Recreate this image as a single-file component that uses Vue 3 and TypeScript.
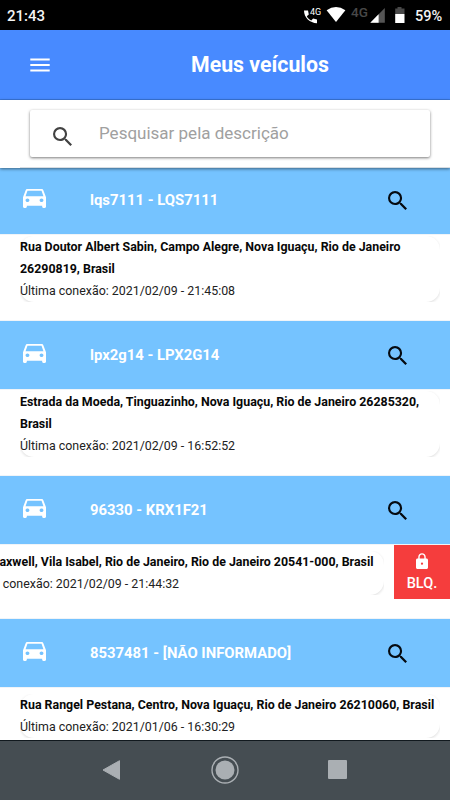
<script setup lang="ts">
interface Vehicle {
  title: string
  address: string
  date: string
  swiped?: boolean
}

const vehicles: Vehicle[] = [
  {
    title: 'lqs7111 - LQS7111',
    address: 'Rua Doutor Albert Sabin, Campo Alegre, Nova Iguaçu, Rio de Janeiro 26290819, Brasil',
    date: '2021/02/09 - 21:45:08',
  },
  {
    title: 'lpx2g14 - LPX2G14',
    address: 'Estrada da Moeda, Tinguazinho, Nova Iguaçu, Rio de Janeiro 26285320, Brasil',
    date: '2021/02/09 - 16:52:52',
  },
  {
    title: '96330 - KRX1F21',
    address: 'Rua Maxwell, Vila Isabel, Rio de Janeiro, Rio de Janeiro 20541-000, Brasil',
    date: '2021/02/09 - 21:44:32',
    swiped: true,
  },
  {
    title: '8537481 - [NÃO INFORMADO]',
    address: 'Rua Rangel Pestana, Centro, Nova Iguaçu, Rio de Janeiro 26210060, Brasil',
    date: '2021/01/06 - 16:30:29',
  },
]
</script>

<template>
  <div class="phone">
    <div class="status">
      <span class="clock">21:43</span>
      <svg class="status-icons" viewBox="0 0 105 30" width="105" height="30">
        <path d="M1 10.500h4l.8 4-2 1.700c1 2 2.500 3.400 4.500 4.400l1.800-2 3.900 1v3.600C6.800 23 1 17.500 1 10.500z" fill="#fff" />
        <text x="7" y="15.200" font-size="9" font-weight="400" fill="#fff">4G</text>
        <path d="M23.600 10.200Q33 3.800 42.400 10.200L33 22z" fill="#fff" />
        <text x="48" y="16.800" font-size="13.500" font-weight="500" fill="#484848">4G</text>
        <path d="M67.300 22.700L81.800 8v14.700z" fill="#555" />
        <path d="M67.300 22.700l8.300-8.400v8.400z" fill="#fff" />
        <path d="M92.200 8.500h2.300V7h4v1.500h3V14h-9.300z" fill="#484848" />
        <path d="M92.200 14h9.300v9h-9.300z" fill="#fff" />
      </svg>
      <span class="percent">59%</span>
    </div>

    <header class="bar">
      <svg class="burger" viewBox="0 0 20 14" width="20" height="14">
        <path d="M.3 1.500h19.400M.3 7h19.400M.3 12.500h19.400" stroke="#fff" stroke-width="2.200" />
      </svg>
      <h1>Meus veículos</h1>
    </header>

    <div class="search-area">
      <div class="search">
        <svg viewBox="3 3 17.490 17.490" width="19" height="19">
          <path fill="#424242" d="M15.500 14h-.79l-.28-.27A6.471 6.471 0 0 0 16 9.500 6.500 6.500 0 1 0 9.500 16c1.610 0 3.090-.59 4.230-1.570l.27.28v.79l5 4.990L20.490 19l-4.990-5zm-6 0C7.010 14 5 11.990 5 9.500S7.010 5 9.500 5 14 7.010 14 9.500 11.990 14 9.500 14z" />
        </svg>
        <span>Pesquisar pela descrição</span>
      </div>
      <div class="rule"></div>
    </div>

    <main class="list">
      <section v-for="v in vehicles" :key="v.title">
        <div class="head">
          <svg class="car" viewBox="3 5 18 16" preserveAspectRatio="none" width="23" height="19">
            <path fill="#fff" d="M18.920 6.010C18.720 5.420 18.160 5 17.500 5h-11c-.66 0-1.210.42-1.420 1.010L3 12v8c0 .55.45 1 1 1h1c.55 0 1-.45 1-1v-1h12v1c0 .55.45 1 1 1h1c.55 0 1-.45 1-1v-8l-2.080-5.990zM6.500 16c-.83 0-1.500-.67-1.500-1.500S5.670 13 6.500 13s1.500.67 1.500 1.500S7.330 16 6.500 16zm11 0c-.83 0-1.500-.67-1.500-1.500s.67-1.500 1.500-1.500 1.500.67 1.500 1.500-.67 1.500-1.500 1.500zM5 11l1.500-4.500h11L19 11H5z" />
          </svg>
          <span class="title">{{ v.title }}</span>
          <svg class="lens" viewBox="3 3 17.490 17.490" width="19" height="19">
            <path fill="#050a10" d="M15.500 14h-.79l-.28-.27A6.471 6.471 0 0 0 16 9.500 6.500 6.500 0 1 0 9.500 16c1.610 0 3.090-.59 4.230-1.570l.27.28v.79l5 4.990L20.490 19l-4.990-5zm-6 0C7.010 14 5 11.990 5 9.500S7.010 5 9.500 5 14 7.010 14 9.500 11.990 14 9.500 14z" />
          </svg>
        </div>
        <div class="body" :class="{ swiped: v.swiped }">
          <div class="clip">
            <div class="card">
              <p class="address">{{ v.address }}</p>
              <p>Última conexão: {{ v.date }}</p>
            </div>
          </div>
          <div v-if="v.swiped" class="block">
            <svg viewBox="4 1 16 21" width="12" height="16">
              <path fill="#fff" d="M18 8h-1V6c0-2.760-2.240-5-5-5S7 3.240 7 6v2H6c-1.100 0-2 .9-2 2v10c0 1.100.9 2 2 2h12c1.100 0 2-.9 2-2V10c0-1.100-.9-2-2-2zm-6 8.500a1.500 1.500 0 1 1 0-3 1.500 1.500 0 0 1 0 3zm3.100-8.500H8.900V6c0-1.710 1.390-3.100 3.100-3.100s3.100 1.390 3.100 3.100v2z" />
            </svg>
            <span>BLQ.</span>
          </div>
        </div>
      </section>
    </main>

    <nav class="nav">
      <svg viewBox="0 0 450 60" width="450" height="60">
        <path d="M103 30L119.500 20.700v18.600z" fill="#aaafb3" stroke="#aaafb3" stroke-width="1" stroke-linejoin="round" />
        <circle cx="225" cy="30" r="13" fill="none" stroke="#aaafb3" stroke-width="1.400" />
        <circle cx="225" cy="30" r="9.500" fill="#aaafb3" />
        <rect x="328" y="20" width="19" height="19" rx="1" fill="#aaafb3" />
      </svg>
    </nav>
  </div>
</template>

<style>
body {
  margin: 0;
  overflow: hidden;
}
</style>

<style scoped>
.phone {
  width: 450px;
  height: 800px;
  display: flex;
  flex-direction: column;
  overflow: hidden;
  background: #fff;
  font-family: Roboto, "Liberation Sans", sans-serif;
}
svg {
  display: block;
  flex: none;
}
.status {
  height: 30px;
  flex: none;
  display: flex;
  align-items: center;
  background: #000;
  color: #f4f4f4;
  font-size: 15px;
  font-weight: 500;
}
.clock {
  width: 296px;
  padding-left: 7px;
  padding-top: 2px;
}
.percent {
  margin-left: 7px;
  padding-top: 2px;
  font-size: 14.500px;
}
.bar {
  height: 70px;
  flex: none;
  display: grid;
  grid-template-columns: 70px 1fr;
  align-items: center;
  background: #488aff;
  border-bottom: 1px solid #3b78dc;
  box-sizing: border-box;
}
.burger {
  margin-left: 30px;
}
h1 {
  margin: 0;
  text-align: center;
  color: #fff;
  font-size: 21.300px;
  font-weight: 700;
}
.search-area {
  height: 68px;
  flex: none;
  box-sizing: border-box;
  padding-top: 10px;
  background: #fff;
  position: relative;
  z-index: 1;
  display: flex;
  flex-direction: column;
  justify-content: space-between;
  box-shadow: 0 1px 3px rgba(0, 0, 0, 0.5);
}
.search {
  width: 400px;
  height: 47px;
  margin-left: 30px;
  display: flex;
  align-items: center;
  border-radius: 2px;
  box-shadow: 0 1px 3px rgba(0, 0, 0, 0.52);
  color: #a0a0a0;
  font-size: 17px;
}
.search svg {
  margin: 5px 27px 0 23px;
}
.search span {
  margin-top: -2px;
}
.rule {
  height: 1px;
  margin-left: 20px;
  background: #d8dde2;
}
.list {
  flex: 1;
  min-height: 0;
  margin-top: -2px;
  overflow: hidden;
}
.head {
  height: 68px;
  display: flex;
  align-items: center;
  background: #75c3ff;
  color: #fff;
  box-shadow: 0 0 1px #a5bfd5;
}
.car {
  margin: 0 44px 4px 23px;
}
.title {
  flex: 1;
  font-size: 14.850px;
  font-weight: 700;
}
.lens {
  margin-right: 43px;
}
.body {
  height: 87px;
  box-sizing: border-box;
  padding: 2px 10px 0 20px;
  display: flex;
}
.clip {
  width: 420px;
  height: 66px;
  flex: none;
  overflow: hidden;
}
.card {
  height: 66px;
  border-radius: 14px;
  box-shadow: 0 1px 3px rgba(0, 0, 0, 0.14);
}
section:last-child .clip,
section:last-child .card,
.swiped .clip,
.swiped .card {
  height: 44px;
}
section:last-child .clip {
  margin-top: 5px;
}
p {
  margin: 0;
  color: #222;
  font-size: 12.400px;
  line-height: 22px;
}
.address {
  color: #080808;
  font-weight: 700;
}
.swiped {
  height: 75px;
  padding: 1px 0 0;
}
.swiped .clip {
  margin: 6px 10px 0 -36px;
}
.block {
  width: 56px;
  height: 54px;
  flex: none;
  display: flex;
  flex-direction: column;
  align-items: center;
  padding-top: 8px;
  box-sizing: border-box;
  background: #f53d3d;
  color: #fff;
  font-size: 14.500px;
  line-height: 17px;
  font-weight: 500;
  gap: 6px;
}
.nav {
  height: 60px;
  flex: none;
  box-sizing: border-box;
  background: #454d52;
  box-shadow: inset 0 1px #11191e;
}
</style>
